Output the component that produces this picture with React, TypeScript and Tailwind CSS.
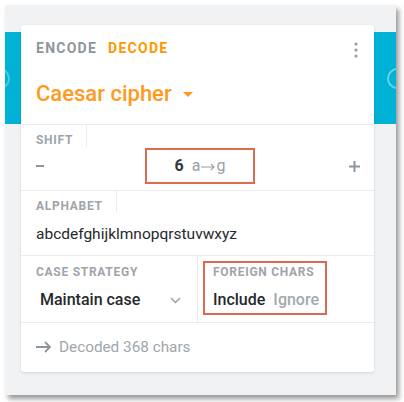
import React from "react";

const Label = ({ text, h }: { text: string; h: string }) => (
  <div className="flex">
    <div
      className={`${h} border-r border-[#e9ebed] pl-[15px] pr-[13px] pt-[7px] text-[12px] font-bold leading-[16px] tracking-[0.06em] text-[#9ea4aa]`}
    >
      {text}
    </div>
  </div>
);

export default function App() {
  return (
    <div className="h-[402px] w-[404px] bg-white pl-[5px] pt-[5px] font-['Roboto',sans-serif]">
      <div className="relative h-[390px] w-[391px] overflow-hidden bg-[linear-gradient(to_bottom,#f1f2f4_27px,#00b2d6_27px,#00b2d6_119px,#f1f2f4_119px)] pl-[16px] pt-[20px] shadow-[3px_4px_5px_rgba(0,0,0,0.4)]">
        {/* faint icons on the cyan band */}
        <div className="absolute left-[382px] top-[63px] h-[21px] w-[21px] rounded-full border-2 border-white/40" />
        <div className="absolute left-[-16px] top-[63px] h-[21px] w-[21px] rounded-full border-2 border-white/30" />

        <div className="relative h-[347px] w-[353px] rounded-[3px] bg-white shadow-[0_1px_3px_rgba(0,0,0,0.12)]">
          {/* tabs + title */}
          <div className="border-b border-[#e9ebed] pb-[16px] pl-[15px] pr-[16px] pt-[13px]">
            <div className="flex items-center justify-between">
              <div className="flex gap-[11px] text-[14px] font-bold leading-[20px] tracking-[0.09em]">
                <span className="text-[#8e969d]">ENCODE</span>
                <span className="text-[#ff9800]">DECODE</span>
              </div>
              <svg width="4" height="16" viewBox="0 0 4 16" className="mt-[3px]">
                <circle cx="2" cy="2" r="1.6" fill="#959ca3" />
                <circle cx="2" cy="8" r="1.6" fill="#959ca3" />
                <circle cx="2" cy="14" r="1.6" fill="#959ca3" />
              </svg>
            </div>
            <div className="mt-[22px] flex items-center gap-[11px]">
              <span className="text-[22px] font-medium leading-[28px] text-[#ff9a1e]">
                Caesar cipher
              </span>
              <svg width="10" height="5" viewBox="0 0 10 5" className="mt-[1px]">
                <path d="M0 0h10L5 5z" fill="#ff9a1e" />
              </svg>
            </div>
          </div>

          {/* shift */}
          <div className="border-b border-[#e9ebed]">
            <Label text="SHIFT" h="h-[22px]" />
            <div className="flex items-center pb-[6px] pl-[15px] pr-[14px] pt-[1px]">
              <div className="w-[109px]">
                <svg width="8" height="2" viewBox="0 0 8 2">
                  <rect width="8" height="2" fill="#8e969d" />
                </svg>
              </div>
              <div className="flex h-[36px] w-[110px] items-center justify-center border-2 border-[#dd6a4e] text-[16px] leading-[20px]">
                <span className="font-bold text-[#333639]">6</span>
                <span className="ml-[8px] flex items-center text-[#9aa0a6]">
                  a
                  <svg width="14" height="8" viewBox="0 0 14 8" className="mx-[1px] mt-[1px]">
                    <path d="M0 4h13M10 1l3 3-3 3" fill="none" stroke="#9aa0a6" strokeWidth="1.1" />
                  </svg>
                  g
                </span>
              </div>
              <div className="flex flex-1 justify-end">
                <svg width="11" height="11" viewBox="0 0 11 11">
                  <rect x="0" y="4.5" width="11" height="2" fill="#8e969d" />
                  <rect x="4.5" y="0" width="2" height="11" fill="#8e969d" />
                </svg>
              </div>
            </div>
          </div>

          {/* alphabet */}
          <div className="border-b border-[#e9ebed] pb-[9px]">
            <Label text="ALPHABET" h="h-[21px]" />
            <div className="mt-[10px] pl-[15px] text-[15.5px] leading-[24px] text-[#26292c]">
              abcdefghijklmnopqrstuvwxyz
            </div>
          </div>

          {/* case / foreign */}
          <div className="flex border-b border-[#e9ebed]">
            <div className="w-[177px] border-r border-[#e9ebed] pb-[10px] pl-[15px] pr-[16px] pt-[8px]">
              <div className="text-[12px] font-bold leading-[16px] tracking-[0.06em] text-[#9ea4aa]">
                CASE STRATEGY
              </div>
              <div className="mt-[8px] flex items-center justify-between pl-[4px]">
                <span className="text-[16px] font-medium leading-[24px] text-[#26292c]">
                  Maintain case
                </span>
                <svg width="11" height="7" viewBox="0 0 11 7">
                  <path d="M1 1l4.5 4.5L10 1" fill="none" stroke="#9aa0a6" strokeWidth="1.5" />
                </svg>
              </div>
            </div>
            <div className="pl-[5px] pt-[5px]">
              <div className="h-[54px] w-[124px] border-2 border-[#dd6a4e] pl-[8px] pt-[1px]">
                <div className="text-[12px] font-bold leading-[16px] tracking-[0.06em] text-[#9ea4aa]">
                  FOREIGN CHARS
                </div>
                <div className="mt-[8px] flex gap-[8px] text-[16px] font-medium leading-[24px]">
                  <span className="text-[#26292c]">Include</span>
                  <span className="text-[#a3a9ae]">Ignore</span>
                </div>
              </div>
            </div>
          </div>

          {/* footer */}
          <div className="flex items-center gap-[7px] pl-[15px] pt-[13px] text-[15.3px] leading-[22px] text-[#a0a6ab]">
            <svg width="16" height="12" viewBox="0 0 16 12">
              <path d="M0 6h14M9 1l5 5-5 5" fill="none" stroke="#8e969d" strokeWidth="1.8" />
            </svg>
            <span>Decoded 368 chars</span>
          </div>
        </div>
      </div>
    </div>
  );
}
